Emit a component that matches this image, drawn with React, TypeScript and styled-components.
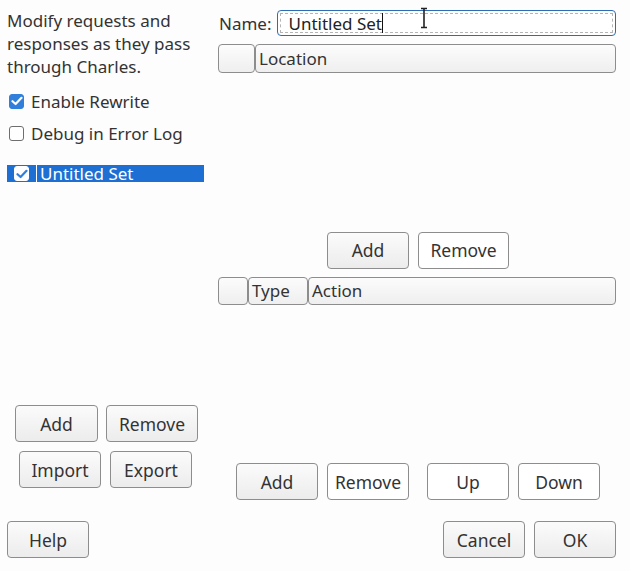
import React from 'react'
import styled, { createGlobalStyle } from 'styled-components'

const GlobalStyle = createGlobalStyle`
  html, body {
    margin: 0;
    padding: 0;
    background: #fdfdfd;
  }
  body {
    font-family: 'Noto Sans', 'Open Sans', sans-serif;
    color: #333333;
  }
`

const Window = styled.div`
  width: 630px;
  height: 571px;
  box-sizing: border-box;
  padding: 0 14px 0 7px;
  display: flex;
  flex-direction: column;
  background: #fdfdfd;
  font-size: 17px;
`

const Main = styled.div`
  height: 500px;
  display: flex;
  gap: 14px;
`

const LeftPane = styled.div`
  width: 197px;
  display: flex;
  flex-direction: column;
  padding-top: 9px;
  box-sizing: border-box;
`

const Intro = styled.p`
  margin: 0;
  line-height: 23px;
  font-size: 17px;
`

const CheckRow = styled.label`
  height: 32px;
  display: flex;
  align-items: center;
  gap: 7px;
  padding-left: 2px;
  &:first-of-type {
    margin-top: 7px;
  }
`

const Box = styled.span<{ $checked?: boolean; $inverse?: boolean }>`
  width: 15px;
  height: 15px;
  box-sizing: border-box;
  border-radius: 3px;
  display: flex;
  align-items: center;
  justify-content: center;
  flex: none;
  background: ${(p) => (p.$inverse ? '#ffffff' : p.$checked ? '#2f7fdb' : '#ffffff')};
  border: 1px solid ${(p) => (p.$inverse ? '#ffffff' : p.$checked ? '#2f7fdb' : '#6e6e6e')};
`

const SetList = styled.div`
  flex: 1;
  margin-top: 16px;
`

const SetItem = styled.div`
  height: 17px;
  background: #1d6fd3;
  color: #ffffff;
  display: flex;
  align-items: center;
`

const ItemCheckCell = styled.div`
  width: 29px;
  height: 100%;
  display: flex;
  align-items: center;
  justify-content: center;
  border-right: 1px solid #ffffff;
  margin-right: 3px;
`

const ItemLabel = styled.span`
  font-size: 17px;
  line-height: 17px;
`

const ButtonGrid = styled.div`
  display: flex;
  flex-direction: column;
  align-items: center;
  gap: 9px;
  margin-bottom: 12px;
`

const ButtonRow = styled.div<{ $gap?: number; $shift?: number }>`
  display: flex;
  justify-content: center;
  gap: ${(p) => p.$gap ?? 9}px;
  padding-left: ${(p) => p.$shift ?? 0}px;
`

const Button = styled.button<{ $flat?: boolean; $w?: number; $push?: number }>`
  width: ${(p) => p.$w ?? 82}px;
  height: 37px;
  box-sizing: border-box;
  border: 1px solid #8d8d8d;
  border-radius: 4px;
  background: ${(p) => (p.$flat ? '#ffffff' : 'linear-gradient(#fbfbfb, #ececec)')};
  font-family: inherit;
  font-size: 17.5px;
  color: #333333;
  padding: 0;
  margin-left: ${(p) => p.$push ?? 0}px;
`

const RightPane = styled.div`
  flex: 1;
  display: flex;
  flex-direction: column;
  padding-top: 10px;
`

const NameRow = styled.div`
  height: 26px;
  display: flex;
  align-items: center;
  gap: 5px;
  position: relative;
`

const NameLabel = styled.span`
  padding-left: 1px;
`

const NameInput = styled.div`
  flex: 1;
  height: 26px;
  box-sizing: border-box;
  border: 1px solid #2e6cb5;
  border-radius: 4px;
  padding: 2px;
  background: #ffffff;
`

const FocusRing = styled.div`
  height: 100%;
  box-sizing: border-box;
  border: 1px dashed #b4b4b4;
  display: flex;
  align-items: center;
  padding-left: 8px;
  font-size: 17px;
  color: #222;
`

const Caret = styled.span`
  display: inline-block;
  width: 1px;
  height: 20px;
  background: #111;
`

const Pointer = styled.svg`
  position: absolute;
  left: 201px;
  top: -3px;
`

const Header = styled.div<{ $cols: string }>`
  height: 29px;
  display: grid;
  grid-template-columns: ${(p) => p.$cols};
  margin-top: 8px;
`

const HeaderCell = styled.div`
  box-sizing: border-box;
  border: 1px solid #8d8d8d;
  border-radius: 4px;
  background: linear-gradient(#fcfcfc, #efefef);
  display: flex;
  align-items: center;
  padding-left: 3px;
  font-size: 17px;
`

const TableBody = styled.div<{ $h: number }>`
  height: ${(p) => p.$h}px;
`

const Footer = styled.div`
  margin-top: 21px;
  display: flex;
  align-items: center;
  gap: 9px;
`

const Spacer = styled.div`
  flex: 1;
`

const Tick = ({ color }: { color: string }) => (
  <svg width="12" height="10" viewBox="0 0 12 10">
    <path d="M1.5 5.2 L4.6 8 L10.5 1.8" fill="none" stroke={color} strokeWidth="2.2" strokeLinecap="round" strokeLinejoin="round" />
  </svg>
)

export default function App() {
  return (
    <>
      <GlobalStyle />
      <Window>
        <Main>
          <LeftPane>
            <Intro>
              Modify requests and
              <br />
              responses as they pass
              <br />
              through Charles.
            </Intro>
            <CheckRow>
              <Box $checked>
                <Tick color="#ffffff" />
              </Box>
              Enable Rewrite
            </CheckRow>
            <CheckRow>
              <Box />
              Debug in Error Log
            </CheckRow>
            <SetList>
              <SetItem>
                <ItemCheckCell>
                  <Box $inverse>
                    <Tick color="#2f7fdb" />
                  </Box>
                </ItemCheckCell>
                <ItemLabel>Untitled Set</ItemLabel>
              </SetItem>
            </SetList>
            <ButtonGrid>
              <ButtonRow $gap={8} $shift={2}>
                <Button $w={83}>Add</Button>
                <Button $w={92}>Remove</Button>
              </ButtonRow>
              <ButtonRow>
                <Button>Import</Button>
                <Button>Export</Button>
              </ButtonRow>
            </ButtonGrid>
          </LeftPane>
          <RightPane>
            <NameRow>
              <NameLabel>Name:</NameLabel>
              <NameInput>
                <FocusRing>
                  Untitled Set
                  <Caret />
                </FocusRing>
              </NameInput>
              <Pointer width="10" height="22" viewBox="0 0 10 22">
                <path d="M2 1.5 H8 M5 1.5 V20.5 M2 20.5 H8" stroke="#222" strokeWidth="1.6" fill="none" />
              </Pointer>
            </NameRow>
            <Header $cols="37px 1fr">
              <HeaderCell />
              <HeaderCell>Location</HeaderCell>
            </Header>
            <TableBody $h={159} />
            <ButtonRow $shift={2}>
              <Button>Add</Button>
              <Button $flat $w={91}>Remove</Button>
            </ButtonRow>
            <Header $cols="30px 60px 1fr">
              <HeaderCell />
              <HeaderCell>Type</HeaderCell>
              <HeaderCell>Action</HeaderCell>
            </Header>
            <TableBody $h={158} />
            <ButtonRow $shift={2}>
              <Button>Add</Button>
              <Button $flat>Remove</Button>
              <Button $flat $push={9}>Up</Button>
              <Button $flat>Down</Button>
            </ButtonRow>
          </RightPane>
        </Main>
        <Footer>
          <Button>Help</Button>
          <Spacer />
          <Button>Cancel</Button>
          <Button>OK</Button>
        </Footer>
      </Window>
    </>
  )
}
